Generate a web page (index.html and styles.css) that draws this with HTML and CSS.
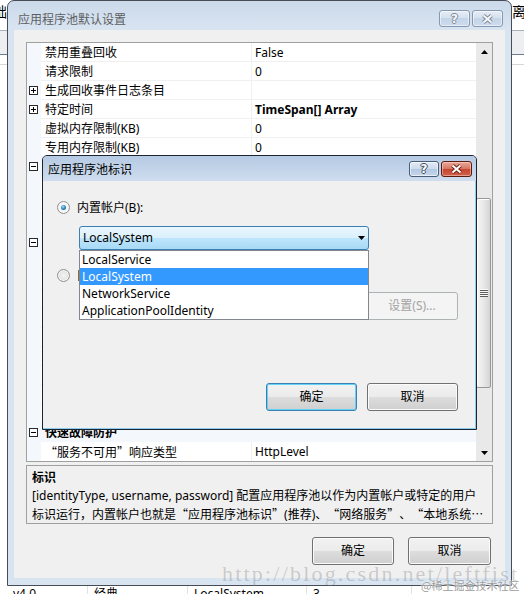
FILE: index.html
```html
<!DOCTYPE html>
<html>
<head>
<meta charset="utf-8">
<title>应用程序池默认设置</title>
<link rel="stylesheet" href="styles.css">
</head>
<body>
<div class="desk">
  <div class="bgapp">
    <div class="bg-top"><span class="bg-ch bg-ch-l">础</span><span class="bg-ch bg-ch-r">离</span></div>
    <div class="bg-toolbar"></div>
    <div class="bg-line"></div>
    <div class="bg-fill"></div>
    <div class="bg-row">
      <span class="c c1">v4.0</span><span class="c c2">经典</span><span class="c c3">LocalSystem</span><span class="c c4">3</span><span class="c c5"></span>
    </div>
  </div>

  <div class="win outer">
    <div class="tb">
      <span class="tb-title">应用程序池默认设置</span>
      <div class="tb-btns">
        <span class="cap-btn help">?</span>
        <span class="cap-btn close"><svg width="13" height="10" viewBox="0 0 13 10"><path d="M2.5 1.5L10.5 8.5M10.5 1.5L2.5 8.5" stroke="#7d8896" stroke-width="4"/><path d="M2.5 1.5L10.5 8.5M10.5 1.5L2.5 8.5" stroke="#f4f7fa" stroke-width="2"/></svg></span>
      </div>
    </div>
    <div class="client">
      <div class="pg">
        <div class="pg-rows">
          <div class="row"><span class="m"></span><span class="l">禁用重叠回收</span><span class="v">False</span></div>
          <div class="row"><span class="m"></span><span class="l">请求限制</span><span class="v">0</span></div>
          <div class="row"><span class="m"><svg width="9" height="9" viewBox="0 0 9 9"><rect x=".5" y=".5" width="8" height="8" fill="#fff" stroke="#2a2a2a"/><path d="M2 4.5h5M4.5 2v5" stroke="#000"/></svg></span><span class="l">生成回收事件日志条目</span><span class="v"></span></div>
          <div class="row"><span class="m"><svg width="9" height="9" viewBox="0 0 9 9"><rect x=".5" y=".5" width="8" height="8" fill="#fff" stroke="#2a2a2a"/><path d="M2 4.5h5M4.5 2v5" stroke="#000"/></svg></span><span class="l">特定时间</span><span class="v b">TimeSpan[] Array</span></div>
          <div class="row"><span class="m"></span><span class="l">虚拟内存限制(KB)</span><span class="v">0</span></div>
          <div class="row"><span class="m"></span><span class="l">专用内存限制(KB)</span><span class="v">0</span></div>
          <div class="row cat"><span class="m"><svg width="9" height="9" viewBox="0 0 9 9"><rect x=".5" y=".5" width="8" height="8" fill="#fff" stroke="#2a2a2a"/><path d="M2 4.5h5" stroke="#000"/></svg></span><span class="l"></span></div>
          <div class="row"><span class="m"></span><span class="l"></span><span class="v"></span></div>
          <div class="row"><span class="m"></span><span class="l"></span><span class="v"></span></div>
          <div class="row"><span class="m"></span><span class="l"></span><span class="v"></span></div>
          <div class="row cat"><span class="m"><svg width="9" height="9" viewBox="0 0 9 9"><rect x=".5" y=".5" width="8" height="8" fill="#fff" stroke="#2a2a2a"/><path d="M2 4.5h5" stroke="#000"/></svg></span><span class="l"></span></div>
          <div class="row"><span class="m"></span><span class="l"></span><span class="v"></span></div>
          <div class="row"><span class="m"></span><span class="l"></span><span class="v"></span></div>
          <div class="row"><span class="m"></span><span class="l"></span><span class="v"></span></div>
          <div class="row"><span class="m"></span><span class="l"></span><span class="v"></span></div>
          <div class="row"><span class="m"></span><span class="l"></span><span class="v"></span></div>
          <div class="row"><span class="m"></span><span class="l"></span><span class="v"></span></div>
          <div class="row"><span class="m"></span><span class="l"></span><span class="v"></span></div>
          <div class="row"><span class="m"></span><span class="l"></span><span class="v"></span></div>
          <div class="row"><span class="m"></span><span class="l"></span><span class="v"></span></div>
          <div class="row cat"><span class="m"><svg width="9" height="9" viewBox="0 0 9 9"><rect x=".5" y=".5" width="8" height="8" fill="#fff" stroke="#2a2a2a"/><path d="M2 4.5h5" stroke="#000"/></svg></span><span class="l">快速故障防护</span></div>
          <div class="row"><span class="m"></span><span class="l"><span class="q ql">“</span>服务不可用<span class="q qr">”</span>响应类型</span><span class="v">HttpLevel</span></div>
        </div>
        <div class="sb">
          <div class="sb-btn"><svg width="7" height="4" viewBox="0 0 7 4"><path d="M0 4H7L3.5 0Z" fill="#000"/></svg></div>
          <div class="thumb"><span class="grip"></span></div>
          <div class="sb-fill"></div>
          <div class="sb-btn"><svg width="7" height="4" viewBox="0 0 7 4"><path d="M0 0H7L3.5 4Z" fill="#000"/></svg></div>
        </div>
      </div>
      <div class="desc">
        <div class="desc-h">标识</div>
        <div>[identityType, username, password] 配置应用程序池以作为内置帐户或特定的用户</div>
        <div>标识运行，内置帐户也就是<span class="q ql">“</span>应用程序池标识<span class="q qr">”</span>(推荐)、<span class="q ql">“</span>网络服务<span class="q qr">”</span>、<span class="q ql">“</span>本地系统<span class="cjk">…</span></div>
      </div>
      <div class="btn-row">
        <button class="btn w82">确定</button>
        <button class="btn w83">取消</button>
      </div>
    </div>
  </div>

  <div class="win inner">
    <div class="tb">
      <span class="tb-title">应用程序池标识</span>
      <div class="tb-btns">
        <span class="cap-btn help">?</span>
        <span class="cap-btn close"><svg width="13" height="10" viewBox="0 0 13 10"><path d="M2.5 1.5L10.5 8.5M10.5 1.5L2.5 8.5" stroke="#6e2317" stroke-width="4"/><path d="M2.5 1.5L10.5 8.5M10.5 1.5L2.5 8.5" stroke="#fff" stroke-width="2"/></svg></span>
      </div>
    </div>
    <div class="dclient">
      <div class="opt"><span class="radio on"></span><span>内置帐户(B):</span></div>
      <div class="combo">
        <div class="combo-box"><span>LocalSystem</span><svg width="7" height="4" viewBox="0 0 7 4"><path d="M0 0H7L3.5 4Z" fill="#000"/></svg></div>
        <ul class="list">
          <li>LocalService</li>
          <li class="sel">LocalSystem</li>
          <li>NetworkService</li>
          <li>ApplicationPoolIdentity</li>
        </ul>
      </div>
      <div class="opt opt2"><span class="radio"></span><span class="stub"></span></div>
      <button class="btn dis set">设置(S)...</button>
      <div class="dbtns">
        <button class="btn def">确定</button>
        <button class="btn">取消</button>
      </div>
    </div>
  </div>

  <div class="wm">http://blog.csdn.net/leftfist</div>
  <div class="wm2">@稀土掘金技术社区</div>
</div>
</body>
</html>
```

FILE: styles.css
```css
* { box-sizing: border-box; }
html, body { margin: 0; padding: 0; }
body {
  font-family: "Noto Sans", "Noto Sans CJK SC", sans-serif;
  font-size: 12px;
  color: #000;
  background: #fff;
}
.cjk { font-family: "Noto Sans CJK SC", sans-serif; }
.q {
  display: inline-block;
  width: 12px;
  font-family: "Noto Sans CJK SC", sans-serif;
}
.ql { text-align: right; }
.qr { text-align: left; }

.desk {
  position: relative;
  width: 524px;
  height: 594px;
  overflow: hidden;
  background: #fff;
}

/* background application fragments */
.bgapp {
  position: absolute;
  inset: 0;
  display: flex;
  flex-direction: column;
}
.bg-top {
  height: 30px;
  flex: none;
  display: flex;
  justify-content: space-between;
  align-items: flex-start;
  padding-top: 2px;
}
.bg-ch {
  font-family: "Noto Sans CJK SC", sans-serif;
  font-size: 14px;
  line-height: 18px;
}
.bg-ch-l { margin-left: -7px; }
.bg-ch-r { margin-right: -2px; }
.bg-toolbar {
  height: 25px;
  flex: none;
  border-top: 1px solid #a7b0bb;
  border-bottom: 1px solid #6c7c93;
  background: #eceef1;
}
.bg-line { margin-top: 9px; height: 1px; flex: none; background: #d6d6d6; }
.bg-fill { flex: 1; }
.bg-row {
  height: 8px;
  flex: none;
  display: flex;
  overflow: hidden;
}
.bg-row .c {
  height: 16px;
  line-height: 16px;
  border-right: 1px solid #e2e2e2;
  padding-left: 6px;
  flex: none;
}
.bg-row .c1 { width: 88px; padding-left: 13px; }
.bg-row .c2 { width: 100px; }
.bg-row .c3 { width: 119px; }
.bg-row .c4 { width: 105px; }
.bg-row .c5 { flex: 1; border-right: 0; }

/* windows */
.win {
  position: absolute;
  display: flex;
  flex-direction: column;
}
.tb {
  display: flex;
  justify-content: space-between;
  align-items: flex-start;
  flex: none;
}
.tb-btns { display: flex; gap: 2px; }
.cap-btn {
  display: flex;
  align-items: center;
  justify-content: center;
  border-radius: 3px;
  font-family: "DejaVu Sans", sans-serif;
  font-weight: bold;
  font-size: 12px;
  line-height: 12px;
}

.outer {
  left: 7px;
  top: 0;
  width: 505px;
  height: 586px;
  border: 1px solid #464d57;
  border-radius: 7px 7px 0 0;
  background: linear-gradient(#cbd9ea, #d9e4f1 28px);
  padding: 0 6px 7px;
}
.outer .tb { height: 29px; }
.outer .tb-title {
  margin: 10px 0 0 4px;
  line-height: 17px;
  color: #5d5f62;
}
.outer .tb-btns { margin: 9px 2px 0 0; }
.outer .cap-btn {
  width: 31px;
  height: 17px;
  border: 1px solid #8799b0;
  background: linear-gradient(#e6edf6, #d3e0ee 50%, #c5d5e8 50%, #ccdbec);
  box-shadow: inset 0 0 0 1px rgba(255,255,255,0.5);
  color: #f4f7fa;
  text-shadow: 1px 0 #7d8896, -1px 0 #7d8896, 0 1px #7d8896, 0 -1px #7d8896;
}

.client {
  flex: 1;
  background: #f0f0f0;
  padding: 12px;
  display: flex;
  flex-direction: column;
}

/* property grid */
.pg {
  height: 420px;
  flex: none;
  border: 1px solid #a0a0a0;
  background: #fff;
  display: flex;
}
.pg-rows {
  flex: 1;
  display: flex;
  flex-direction: column;
  overflow: hidden;
}
.row {
  display: grid;
  grid-template-columns: 14px 210px 1fr;
  height: 19px;
  flex: none;
}
.row .m {
  background: #f4f7fb;
  display: flex;
  align-items: center;
  padding-left: 2px;
}
.row .l, .row .v {
  border-bottom: 1px solid #f0f0f0;
  padding-top: 2px;
  line-height: 16px;
  white-space: nowrap;
}
.row .l { padding-left: 4px; }
.row .v { padding-left: 3px; border-left: 1px solid #f0f0f0; }
.row .b { font-weight: bold; }
.row.cat .l {
  grid-column: span 2;
  background: #f4f7fb;
  border-bottom-color: #f4f7fb;
  font-weight: bold;
}

.sb {
  width: 16px;
  flex: none;
  display: flex;
  flex-direction: column;
  background: #e9e9e9;
}
.sb-btn {
  height: 17px;
  flex: none;
  display: flex;
  align-items: center;
  justify-content: center;
}
.thumb {
  margin-top: 138px;
  margin-right: 1px;
  height: 190px;
  flex: none;
  border: 1px solid #979797;
  border-radius: 2px;
  background: linear-gradient(to right, #f6f6f6, #e8e8e8 50%, #d5d5d5);
  box-shadow: inset 1px 1px 0 #fff;
  display: flex;
  align-items: center;
  justify-content: center;
}
.grip {
  width: 8px;
  height: 8px;
  background: repeating-linear-gradient(#fafafa 0 1px, #5c5c5c 1px 2px);
}
.sb-fill { flex: 1; }

/* description */
.desc {
  margin-top: 3px;
  height: 59px;
  flex: none;
  border: 1px solid #a0a0a0;
  background: #f0f0f0;
  padding: 3px 0 0 5px;
  line-height: 18px;
  white-space: nowrap;
  overflow: hidden;
}
.desc-h { font-weight: bold; }

/* buttons */
.btn {
  height: 28px;
  padding: 0;
  border: 1px solid #707070;
  border-radius: 3px;
  background: linear-gradient(#f2f2f2, #ebebeb 50%, #dddddd 50%, #cfcfcf);
  box-shadow: inset 0 0 0 1px #fbfbfb;
  font: inherit;
  color: #000;
  line-height: 16px;
}
.btn-row {
  margin-top: 13px;
  display: flex;
  justify-content: flex-end;
  gap: 14px;
  padding-right: 2px;
}
.w82 { width: 82px; }
.w83 { width: 83px; }
.btn.def {
  border-color: #3c7fb1;
  box-shadow: inset 0 0 0 1px #62d2f6;
}
.btn.dis {
  border-color: #adb2b5;
  background: #f4f4f4;
  box-shadow: none;
  color: #a3a3a3;
}

/* inner dialog */
.inner {
  left: 42px;
  top: 155px;
  width: 435px;
  height: 275px;
  border: 1px solid #1b242f;
  border-radius: 5px 5px 0 0;
  background: #c9daed;
  z-index: 2;
}
.inner .tb {
  height: 25px;
  border-radius: 4px 4px 0 0;
  background: linear-gradient(#b5cae3, #cfddef);
}
.inner .tb-title {
  margin: 5px 0 0 5px;
  line-height: 17px;
}
.inner .tb-btns { margin: 5px 4px 0 0; }
.inner .cap-btn { height: 16px; }
.inner .help {
  width: 30px;
  border: 1px solid #4a5d78;
  background: linear-gradient(#e3ecf7, #cbdaec 50%, #b3c8e2 50%, #c4d6ec);
  box-shadow: inset 0 0 0 1px rgba(255,255,255,0.6);
  color: #fff;
  text-shadow: 1px 0 #3e4a5a, -1px 0 #3e4a5a, 0 1px #3e4a5a, 0 -1px #3e4a5a;
}
.inner .close {
  width: 31px;
  border: 1px solid #5d1a10;
  background: linear-gradient(#e9a99b, #d7755f 50%, #c4442f 50%, #d0614a);
  box-shadow: inset 0 0 0 1px rgba(255,220,210,0.5);
}

.dclient {
  flex: 1;
  background: #f0f0f0;
  padding: 20px 18px 18px 14px;
  display: flex;
  flex-direction: column;
  box-shadow: inset -1px -1px 0 #8bcdf0;
}
.opt {
  display: flex;
  align-items: center;
  gap: 7px;
  height: 13px;
  line-height: 16px;
  white-space: nowrap;
}
.opt2 { margin-top: 19px; }
.stub {
  width: 3px;
  height: 11px;
  border-left: 1px solid #8a6a40;
  margin-left: 1px;
}
.radio {
  position: relative;
  width: 13px;
  height: 13px;
  flex: none;
  border-radius: 50%;
  border: 1px solid #8e8f8f;
  background: radial-gradient(circle at 50% 50%, #f4f4f4 0, #e2e2e2 60%, #d0d0d0 100%);
  box-shadow: inset 0 0 0 1px #f8f8f8;
}
.radio.on { background: #f4f4f4; }
.radio.on::after {
  content: "";
  position: absolute;
  left: 3px;
  top: 3px;
  width: 5px;
  height: 5px;
  border-radius: 50%;
  background: radial-gradient(circle at 40% 35%, #a6e2fb 0, #3a8cc6 45%, #1a4f7c 100%);
}

.combo {
  position: relative;
  margin: 12px 0 0 22px;
  width: 290px;
  height: 24px;
  flex: none;
  z-index: 3;
}
.combo-box {
  height: 24px;
  border: 1px solid #3c7fb1;
  border-radius: 3px;
  background: linear-gradient(#eaf6fd, #d9f0fc 50%, #bee6fd 50%, #a7d9f5);
  display: flex;
  align-items: center;
  justify-content: space-between;
  padding: 0 3px 0 3px;
  line-height: 16px;
}
.list {
  position: absolute;
  left: 0;
  top: 24px;
  width: 290px;
  margin: 0;
  padding: 0;
  list-style: none;
  border: 1px solid #828790;
  background: #fff;
}
.list li {
  height: 17px;
  line-height: 17px;
  padding-left: 2px;
  white-space: nowrap;
}
.list li.sel { background: #3399ff; color: #fff; }

.set {
  align-self: flex-end;
  margin-top: 10px;
  width: 92px;
  flex: none;
}
.dbtns {
  margin-top: auto;
  display: flex;
  justify-content: flex-end;
  gap: 10px;
}
.dbtns .btn { width: 91px; }

/* watermark */
.wm {
  position: absolute;
  left: 222px;
  top: 563px;
  font-family: "Liberation Serif", serif;
  font-size: 22px;
  line-height: 22px;
  letter-spacing: 2.2px;
  white-space: nowrap;
  color: rgba(120, 120, 120, 0.33);
  z-index: 5;
}
.wm2 {
  position: absolute;
  left: 421px;
  top: 578px;
  font-family: "Noto Sans CJK SC", sans-serif;
  font-size: 11px;
  line-height: 14px;
  white-space: nowrap;
  color: #9b9b9b;
  text-shadow: 0 0 2px #fff, 0 0 1px #fff;
  z-index: 6;
}
```
